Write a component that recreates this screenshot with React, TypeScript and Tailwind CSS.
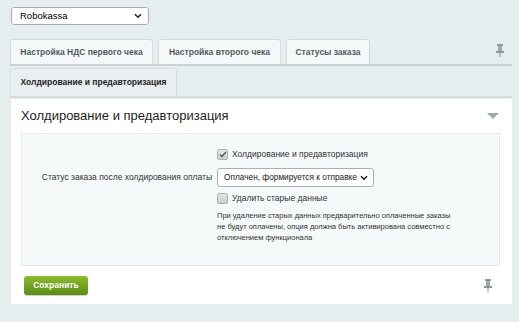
import React from "react";

function Pin() {
  return (
    <svg width="8" height="13" viewBox="0 0 8 13">
      <rect x="1" y="0" width="6" height="2" fill="#8e9699" />
      <rect x="2" y="2" width="4" height="5" fill="#a0a8ab" />
      <rect x="0" y="7" width="8" height="2" fill="#8e9699" />
      <rect x="3.5" y="9" width="1" height="4" fill="#8e9699" />
    </svg>
  );
}

function Chevron() {
  return (
    <svg width="8" height="6" viewBox="0 0 8 6">
      <path d="M1 1.2 L4 4.2 L7 1.2" stroke="#222" strokeWidth="1.6" fill="none" />
    </svg>
  );
}

function Checkbox({ checked }: { checked?: boolean }) {
  return (
    <span className="inline-flex h-[11px] w-[11px] shrink-0 items-center justify-center rounded-[2px] border border-[#a9b0b3] bg-gradient-to-b from-[#e4e7e8] to-[#c9cfd1]">
      {checked && (
        <svg width="8" height="7" viewBox="0 0 8 7">
          <path d="M1 3.5 L3 5.5 L7 1" stroke="#555" strokeWidth="1.3" fill="none" />
        </svg>
      )}
    </span>
  );
}

export default function App() {
  const font = { fontFamily: "'Liberation Sans', Arial, Helvetica, sans-serif" };
  return (
    <div className="h-[322px] w-[519px] overflow-hidden bg-[#e6edef] pl-[10px] pr-[7px] pt-[7px] text-[#000]" style={font}>
      <div className="ml-[1px] flex h-[18px] w-[138px] items-center justify-between rounded-[3px] border border-[#a8b0b3] bg-white pl-[8px] pr-[6px] text-[9.5px] text-[#000]">
        <span>Robokassa</span>
        <Chevron />
      </div>

      <div className="mt-[14px] flex items-end border-b-2 border-[#c9d1d4]">
        <div className="flex items-end gap-[5px]">
          <div className="flex h-[25px] w-[143px] items-center justify-center whitespace-nowrap rounded-t-[3px] border border-b-0 border-[#d5dcde] bg-[#f5f8f8] text-[8.5px] font-bold text-[#535c60]">
            Настройка НДС первого чека
          </div>
          <div className="flex h-[25px] w-[123px] items-center justify-center whitespace-nowrap rounded-t-[3px] border border-b-0 border-[#d5dcde] bg-[#f5f8f8] text-[8.5px] font-bold text-[#535c60]">
            Настройка второго чека
          </div>
          <div className="flex h-[25px] w-[84px] items-center justify-center whitespace-nowrap rounded-t-[3px] border border-b-0 border-[#d5dcde] bg-[#f5f8f8] text-[8.5px] font-bold text-[#535c60]">
            Статусы заказа
          </div>
        </div>
        <div className="ml-auto mr-[8px] self-center pb-[2px]">
          <Pin />
        </div>
      </div>

      <div className="mt-[2px] flex border-b-2 border-[#d3dbdd]">
        <div className="flex h-[28px] w-[167px] items-center justify-center whitespace-nowrap rounded-t-[3px] border border-b-0 border-[#d6dde0] bg-[#e9eff0] text-[8.5px] font-bold text-[#1f2426]">
          Холдирование и предавторизация
        </div>
      </div>

      <div className="ml-[1px] mt-[1px] h-[205px] w-[501px] bg-white pl-[10px] pr-[12px]">
        <div className="flex h-[34px] items-center justify-between pr-[1px]">
          <span className="text-[13px] text-[#1b1f20]">Холдирование и предавторизация</span>
          <svg width="12" height="6" viewBox="0 0 12 6">
            <path d="M0 0 L12 0 L6 6 Z" fill="#a0a8ab" />
          </svg>
        </div>
        <div className="h-[133px] border border-[#e2e8ea] bg-[#f5f9f9] pt-[14px] text-[8.5px] text-[#333]">
          <div className="grid grid-cols-[190px_1fr] items-center gap-x-[5px]">
            <div />
            <div className="flex h-[13px] items-center gap-[4px]">
              <Checkbox checked />
              <span>Холдирование и предавторизация</span>
            </div>

            <div className="mt-[7px] whitespace-nowrap text-right text-[#333]">Статус заказа после холдирования оплаты</div>
            <div className="mt-[7px]">
              <div className="flex h-[19px] w-[157px] items-center justify-between rounded-[3px] border border-[#a8b0b3] bg-white pl-[6px] pr-[5px] text-[8.3px] text-[#222]">
                <span className="whitespace-nowrap">Оплачен, формируется к отправке</span>
                <Chevron />
              </div>
            </div>

            <div />
            <div className="mt-[5px] flex h-[13px] items-center gap-[4px]">
              <Checkbox />
              <span>Удалить старые данные</span>
            </div>

            <div />
            <div className="mt-[5px] w-[234px] text-[7.5px] leading-[11px]">
              При удаление старых данных предварительно оплаченные заказы не будут оплачены, опция должна быть активирована совместно с отключением функционала
            </div>
          </div>
        </div>
        <div className="flex h-[38px] items-center justify-between pl-[3px] pr-[8px]">
          <div className="flex h-[19px] w-[64px] items-center justify-center rounded-[3px] bg-gradient-to-b from-[#8fbb2f] to-[#5b8c10] text-[8.5px] font-bold text-white shadow-[0_1px_1px_rgba(0,0,0,0.2)]">
            Сохранить
          </div>
          <Pin />
        </div>
      </div>
    </div>
  );
}
